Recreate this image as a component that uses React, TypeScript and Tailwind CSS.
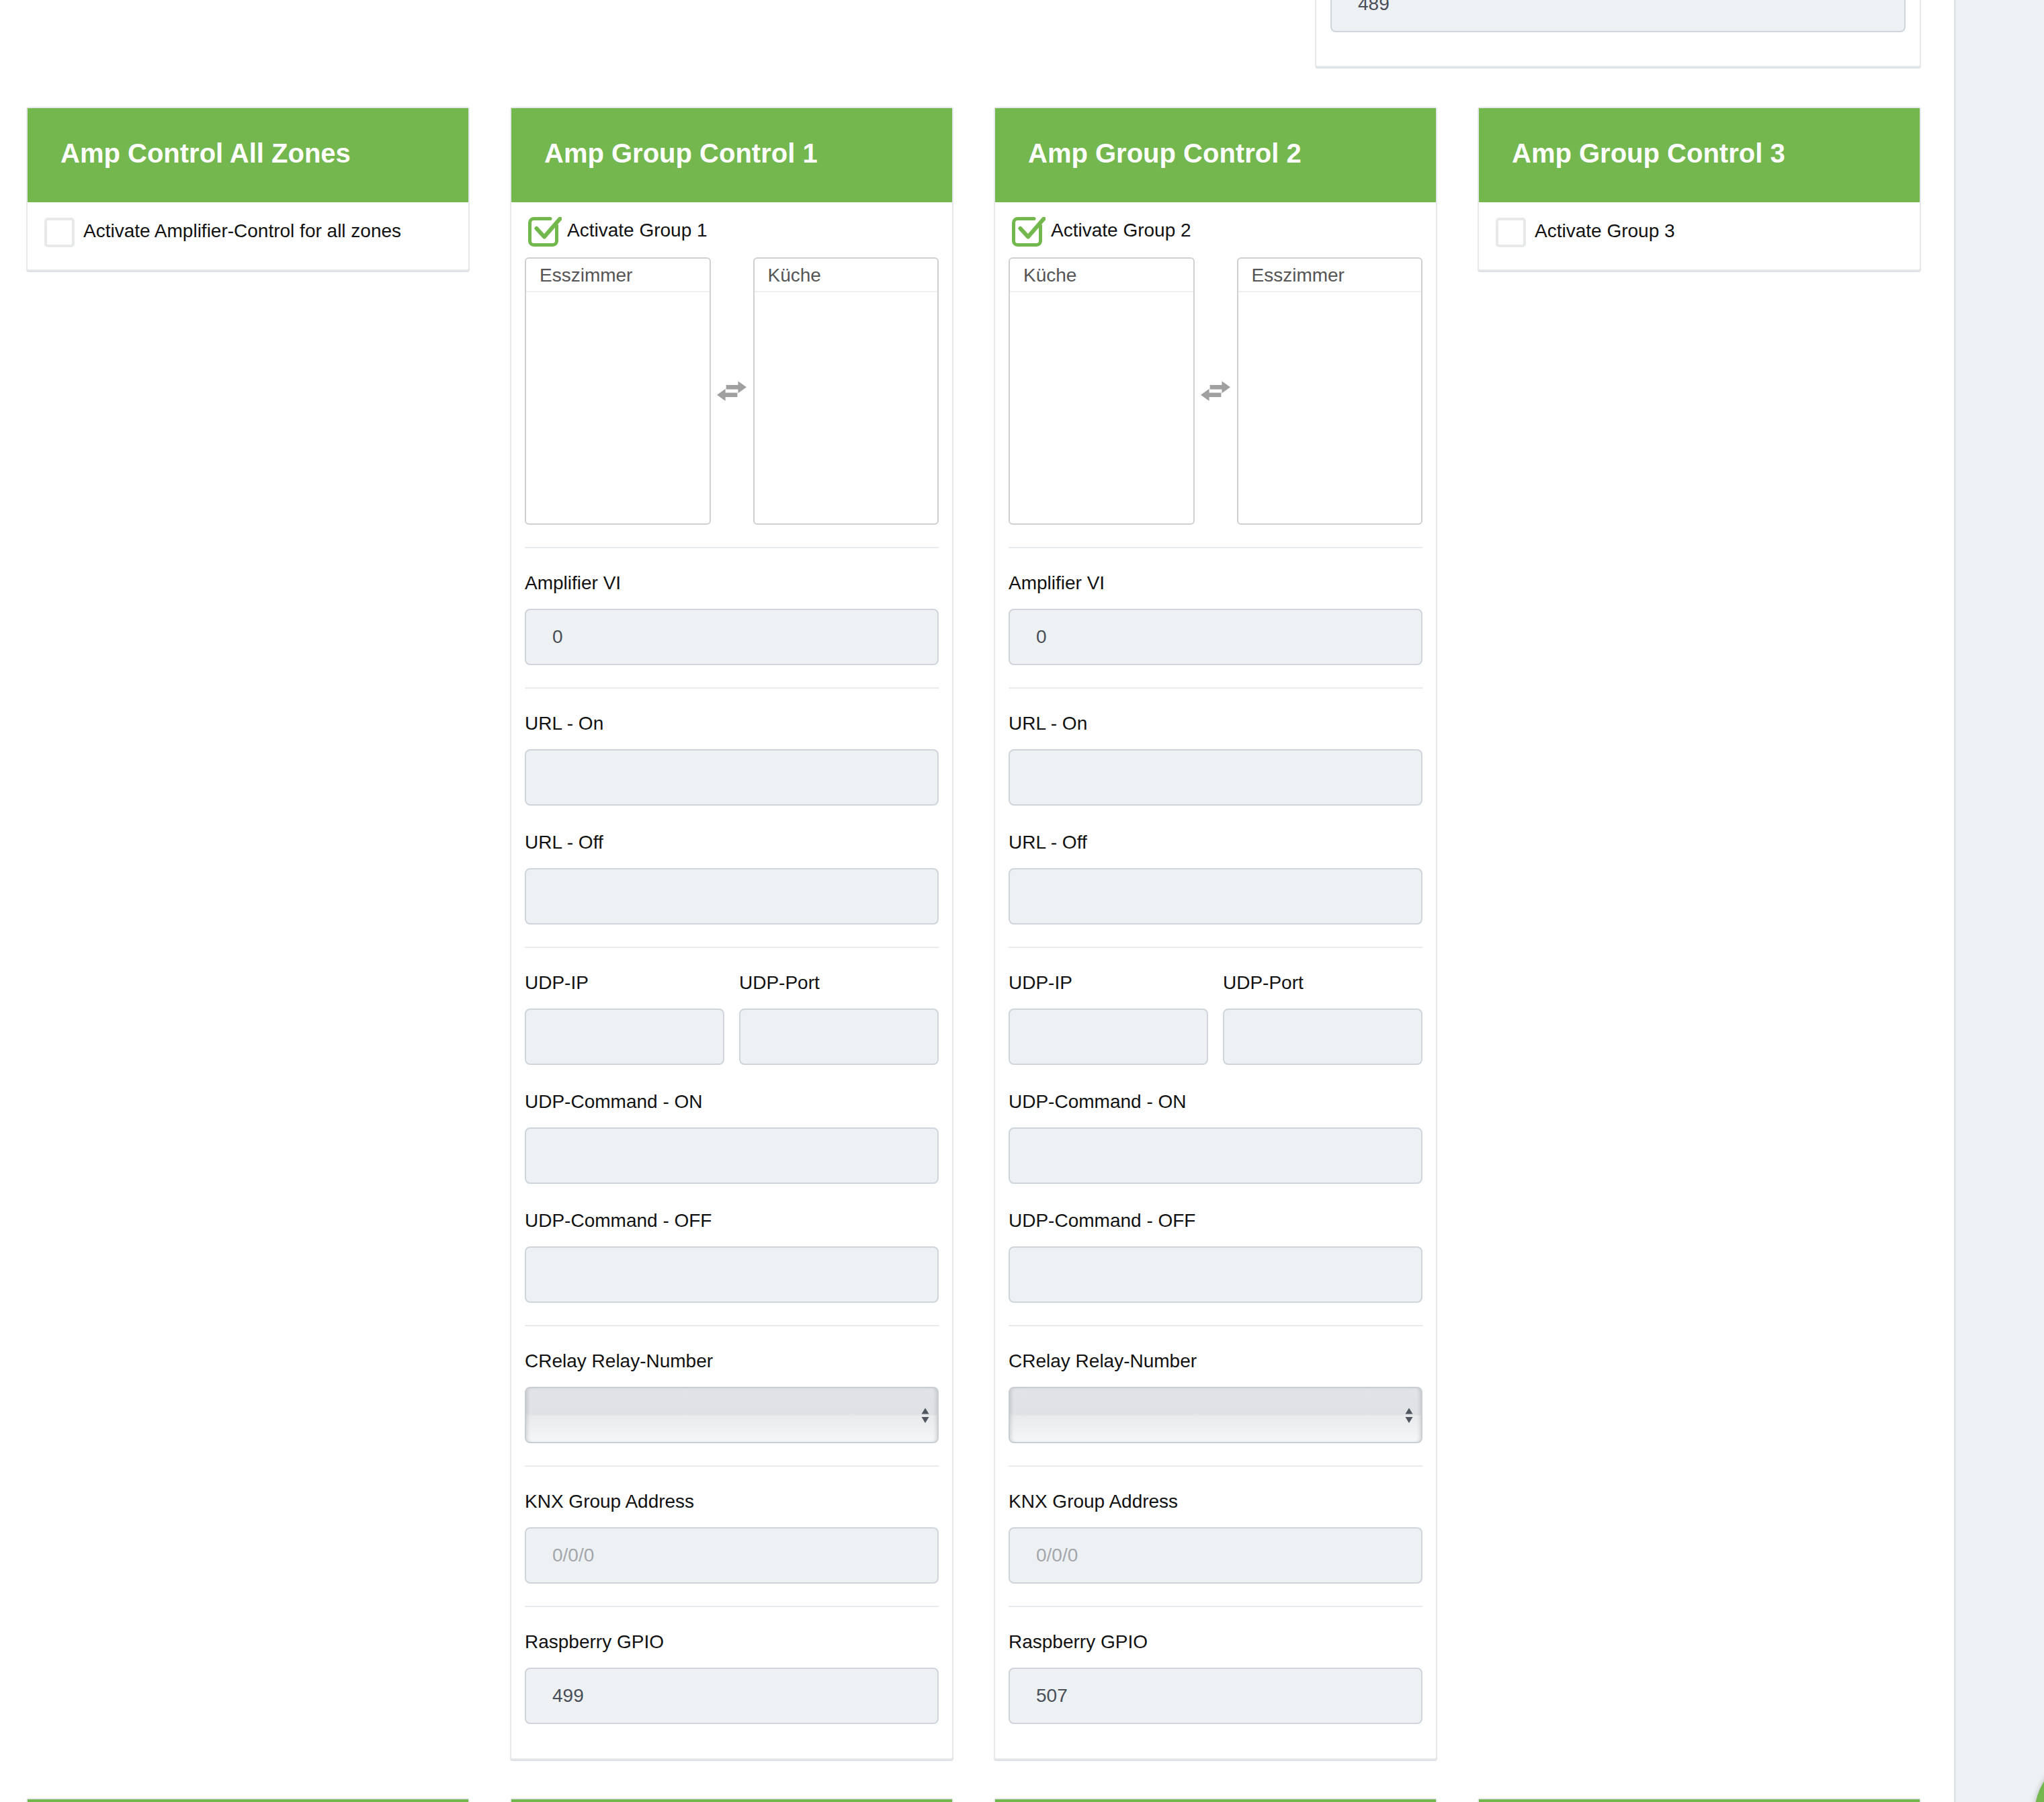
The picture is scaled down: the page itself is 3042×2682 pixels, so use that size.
import React from 'react';

const GREEN = 'bg-[#74b74f]';

function CheckedIcon() {
  return (
    <svg width="50" height="44" viewBox="0 0 50 44" className="shrink-0">
      <path
        d="M33 2.5 H8.5 a6 6 0 0 0 -6 6 V35.5 a6 6 0 0 0 6 6 H36.5 a6 6 0 0 0 6 -6 V13"
        fill="none"
        stroke="#72b84c"
        strokeWidth="5"
        strokeLinecap="round"
      />
      <path
        d="M12.5 17 L24 29.5 L47.5 2.5"
        fill="none"
        stroke="#72b84c"
        strokeWidth="6"
        strokeLinecap="round"
        strokeLinejoin="round"
      />
    </svg>
  );
}

function SwapIcon() {
  return (
    <svg width="44" height="30" viewBox="0 0 42 28" className="blur-[0.4px]">
      <path d="M13 5.5 H30 V0 L42 8.5 L30 17 V11.5 H13 Z" fill="#a0a0a0" />
      <path d="M29 16.5 H12 V11 L0 19.5 L12 28 V22.5 H29 Z" fill="#a0a0a0" />
    </svg>
  );
}

function CheckRow({ checked, label }: { checked?: boolean; label: string }) {
  return (
    <div className="flex h-[44px] items-center pl-[5px]">
      {checked ? (
        <CheckedIcon />
      ) : (
        <div className="h-[44px] w-[45px] shrink-0 rounded-[5px] border-[4px] border-[#e7e9eb] bg-white"></div>
      )}
      <span
        className={`${checked ? 'ml-[8px]' : 'ml-[13px]'} mb-[5px] text-[28px] leading-[40px] text-[#111]`}
      >
        {label}
      </span>
    </div>
  );
}

function Card({ title, children }: { title: string; children?: React.ReactNode }) {
  return (
    <div className="w-[660px] shrink-0 rounded-[4px] border-2 border-[#e6e9ec] bg-white shadow-[0_2px_0_#dde1e5]">
      <div
        className={`flex h-[140px] items-center ${GREEN} pb-[6px] pl-[49px] text-[40px] font-bold text-white`}
      >
        {title}
      </div>
      {children}
    </div>
  );
}

function Divider() {
  return <div className="mb-[32px] mt-[33px] h-[2px] bg-[#e8ebee]"></div>;
}

function Field({
  label,
  value,
  placeholder,
  className = '',
}: {
  label: string;
  value?: string;
  placeholder?: string;
  className?: string;
}) {
  return (
    <div className={className}>
      <div className="text-[28px] leading-[40px] text-[#111]">{label}</div>
      <input
        readOnly
        value={value ?? ''}
        placeholder={placeholder}
        className="mt-[18px] block h-[84px] w-full rounded-[8px] border-2 border-[#cfd5db] bg-[#eef1f4] pl-[39px] text-[28px] text-[#4a4f57] outline-none placeholder:text-[#a3a7ab]"
      />
    </div>
  );
}

function SelectField({ label }: { label: string }) {
  return (
    <div>
      <div className="text-[28px] leading-[40px] text-[#111]">{label}</div>
      <div className="relative mt-[18px] h-[84px] w-full rounded-[8px] border-2 border-[#c9ced3] bg-[linear-gradient(to_bottom,#e1e3e6_0%,#dfe1e4_48%,#e8eaec_52%,#f5f6f7_100%)] shadow-[inset_5px_0_5px_-3px_rgba(0,0,0,0.12),inset_-5px_0_5px_-3px_rgba(0,0,0,0.12)]">
        <svg
          width="12"
          height="24"
          viewBox="0 0 12 24"
          className="absolute right-[12px] top-[29px]"
        >
          <path d="M6 0.5 L11.5 9.5 H0.5 Z M0.5 14 H11.5 L6 23 Z" fill="#4f5660" />
        </svg>
      </div>
    </div>
  );
}

function ListBox({ title }: { title: string }) {
  return (
    <div className="h-[398px] flex-1 rounded-[6px] border-2 border-[#d0d0d0] bg-white">
      <div className="h-[50px] border-b-2 border-[#efefef] pl-[20px] text-[28px] leading-[50px] text-[#555]">
        {title}
      </div>
    </div>
  );
}

function GroupCard({
  n,
  left,
  right,
  gpio,
}: {
  n: number;
  left: string;
  right: string;
  gpio: string;
}) {
  return (
    <Card title={`Amp Group Control ${n}`}>
      <div className="px-[20px] pb-[51px] pt-[22px]">
        <CheckRow checked label={`Activate Group ${n}`} />
        <div className="mt-[16px] flex">
          <ListBox title={left} />
          <div className="flex w-[63px] items-center justify-center">
            <SwapIcon />
          </div>
          <ListBox title={right} />
        </div>
        <Divider />
        <Field label="Amplifier VI" value="0" />
        <Divider />
        <Field label="URL - On" />
        <Field label="URL - Off" className="mt-[35px]" />
        <Divider />
        <div className="flex gap-[22px]">
          <Field label="UDP-IP" className="flex-1" />
          <Field label="UDP-Port" className="flex-1" />
        </div>
        <Field label="UDP-Command - ON" className="mt-[35px]" />
        <Field label="UDP-Command - OFF" className="mt-[35px]" />
        <Divider />
        <SelectField label="CRelay Relay-Number" />
        <Divider />
        <Field label="KNX Group Address" placeholder="0/0/0" />
        <Divider />
        <Field label="Raspberry GPIO" value={gpio} />
      </div>
    </Card>
  );
}

export default function App() {
  return (
    <div className="relative flex h-screen overflow-hidden bg-white font-['Liberation_Sans',Helvetica,Arial,sans-serif]">
      <main className="w-[2908px] shrink-0 pl-[39px] pr-[49px]">
        <div className="flex h-[100px] items-end">
          <div className="ml-auto w-[902px] rounded-b-[4px] border-x-2 border-b-2 border-[#e6e9ec] px-[21px] pb-[50px] shadow-[0_2px_0_#dde1e5]">
            <input
              readOnly
              value="489"
              className="block h-[84px] w-full rounded-[8px] border-2 border-[#cfd5db] bg-[#eef1f4] pl-[39px] text-[28px] text-[#4a4f57] outline-none"
            />
          </div>
        </div>

        <div className="mt-[59px] flex items-start gap-[60px]">
          <Card title="Amp Control All Zones">
            <div className="px-[20px] pb-[33px] pt-[23px]">
              <CheckRow label="Activate Amplifier-Control for all zones" />
            </div>
          </Card>
          <GroupCard n={1} left="Esszimmer" right="Küche" gpio="499" />
          <GroupCard n={2} left="Küche" right="Esszimmer" gpio="507" />
          <Card title="Amp Group Control 3">
            <div className="px-[20px] pb-[33px] pt-[23px]">
              <CheckRow label="Activate Group 3" />
            </div>
          </Card>
        </div>

        <div className="mt-[57px] flex items-start gap-[60px]">
          <Card title="" />
          <Card title="" />
          <Card title="" />
          <Card title="" />
        </div>
      </main>

      <aside className="flex-1 border-l-[3px] border-[#dfe4e8] bg-[#eef2f5]"></aside>

      <div className="absolute left-[3028px] top-[2608px] h-[184px] w-[184px] rounded-full bg-[#74b74f] shadow-[0_0_8px_rgba(0,0,0,0.25)]"></div>
    </div>
  );
}
